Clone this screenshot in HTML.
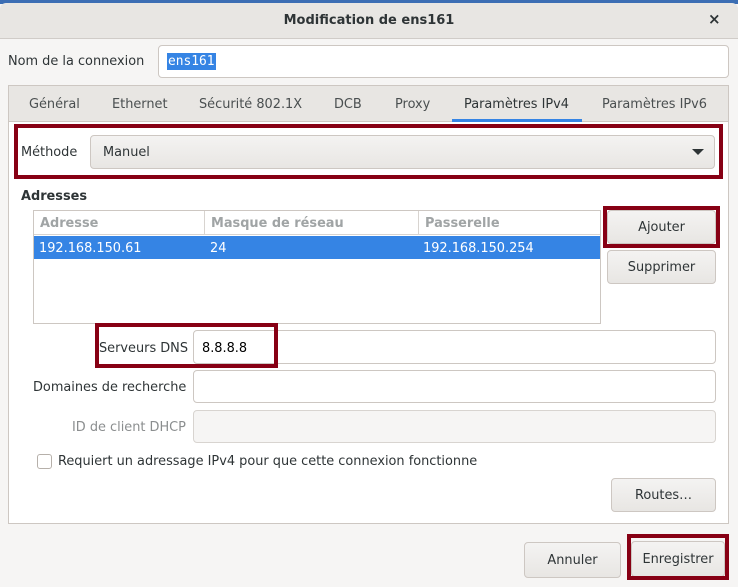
<!DOCTYPE html>
<html><head><meta charset="utf-8"><style>
*{box-sizing:border-box;margin:0;padding:0}
body{width:738px;height:587px;overflow:hidden;background:#f6f5f4;font-family:"DejaVu Sans","Liberation Sans",sans-serif;font-size:12.9px;line-height:17px;color:#2e3436;position:relative}
.a{position:absolute}
.inp{position:absolute;background:#fff;border:1px solid #cdc7c2;border-radius:4px}
.btn{position:absolute;background:linear-gradient(#f4f3f2,#e8e6e3);border:1px solid #cdc7c2;border-radius:4px;text-align:center;line-height:33px}
.red{position:absolute;border:4px solid #870014}
.dis{position:absolute;background:#f6f5f4;border:1px solid #d8d4d0;border-radius:4px}
</style></head><body>
<div class="a" style="left:0;top:0;width:738px;height:4px;background:#3c6eb4"></div>
<div class="a" style="left:0;top:3px;width:738px;height:36px;background:#e8e6e3;border-bottom:1px solid #d0ccc8;border-radius:6px 6px 0 0"></div>
<div class="a" style="left:0;top:12px;width:738px;text-align:center;font-weight:bold;font-size:13px">Modification de ens161</div>
<div class="a" style="left:708px;top:11px;font-size:15px;font-weight:bold">×</div>
<div class="a" style="left:8px;top:53px">Nom de la connexion</div>
<div class="inp" style="left:158px;top:45px;width:571px;height:33px"></div>
<div class="a" style="left:167px;top:53px;background:#3584e4;color:#fff;font-family:'DejaVu Sans Mono',monospace;padding:0 1px">ens161</div>
<div class="a" style="left:8px;top:85px;width:721px;height:439px;background:#fff;border:1px solid #cdc7c2"></div>
<div class="a" style="left:9px;top:86px;width:719px;height:36px;background:#e8e6e3;border-bottom:1px solid #cdc7c2"></div>
<div class="a" style="left:29px;top:96px;color:#4a4f50">Général</div>
<div class="a" style="left:112px;top:96px;color:#4a4f50">Ethernet</div>
<div class="a" style="left:199px;top:96px;color:#4a4f50">Sécurité 802.1X</div>
<div class="a" style="left:334px;top:96px;color:#4a4f50">DCB</div>
<div class="a" style="left:395px;top:96px;color:#4a4f50">Proxy</div>
<div class="a" style="left:464px;top:96px;color:#2e3436">Paramètres IPv4</div>
<div class="a" style="left:452px;top:119px;width:130px;height:3px;background:#3584e4"></div>
<div class="a" style="left:602px;top:96px;color:#4a4f50">Paramètres IPv6</div>
<div class="a" style="left:21px;top:144px">Méthode</div>
<div class="btn" style="left:90px;top:135px;width:625px;height:34px;text-align:left;padding-left:12px">Manuel</div>
<div class="a" style="left:692px;top:149px;width:0;height:0;border-left:6px solid transparent;border-right:6px solid transparent;border-top:6px solid #2e3436"></div>
<div class="red" style="left:14px;top:124px;width:709px;height:55px"></div>
<div class="a" style="left:21px;top:188px;font-weight:bold">Adresses</div>
<div class="a" style="left:33px;top:210px;width:568px;height:114px;background:#fff;border:1px solid #cdc7c2"></div>
<div class="a" style="left:34px;top:211px;width:566px;height:24px;border-bottom:1px solid #d8d4d0"></div>
<div class="a" style="left:204px;top:211px;width:1px;height:24px;background:#d8d4d0"></div>
<div class="a" style="left:418px;top:211px;width:1px;height:24px;background:#d8d4d0"></div>
<div class="a" style="left:40px;top:215px;font-weight:bold;color:#a0a4a5">Adresse</div>
<div class="a" style="left:211px;top:215px;font-weight:bold;color:#a0a4a5">Masque de réseau</div>
<div class="a" style="left:425px;top:215px;font-weight:bold;color:#a0a4a5">Passerelle</div>
<div class="a" style="left:34px;top:236px;width:566px;height:23px;background:#3584e4"></div>
<div class="a" style="left:39px;top:240px;color:#fff">192.168.150.61</div>
<div class="a" style="left:210px;top:240px;color:#fff">24</div>
<div class="a" style="left:423px;top:240px;color:#fff">192.168.150.254</div>
<div class="btn" style="left:607px;top:210px;width:109px;height:34px">Ajouter</div>
<div class="red" style="left:603px;top:206px;width:117px;height:42px"></div>
<div class="btn" style="left:607px;top:250px;width:109px;height:34px">Supprimer</div>
<div class="a" style="left:99px;top:340px">Serveurs DNS</div>
<div class="inp" style="left:193px;top:330px;width:523px;height:34px"></div>
<div class="a" style="left:202px;top:340px;color:#000">8.8.8.8</div>
<div class="red" style="left:95px;top:323px;width:183px;height:45px"></div>
<div class="a" style="left:33px;top:379px">Domaines de recherche</div>
<div class="inp" style="left:193px;top:370px;width:523px;height:33px"></div>
<div class="a" style="left:72px;top:419px;color:#8b8e8f">ID de client DHCP</div>
<div class="dis" style="left:193px;top:410px;width:523px;height:33px"></div>
<div class="a" style="left:37px;top:454px;width:15px;height:15px;border:1px solid #b6b0aa;border-radius:3px;background:#fff"></div>
<div class="a" style="left:58px;top:453px">Requiert un adressage IPv4 pour que cette connexion fonctionne</div>
<div class="btn" style="left:611px;top:478px;width:105px;height:34px">Routes…</div>
<div class="btn" style="left:524px;top:542px;width:97px;height:36px;line-height:35px">Annuler</div>
<div class="btn" style="left:631px;top:541px;width:94px;height:36px;line-height:35px">Enregistrer</div>
<div class="red" style="left:627px;top:534px;width:102px;height:46px"></div>
</body></html>
